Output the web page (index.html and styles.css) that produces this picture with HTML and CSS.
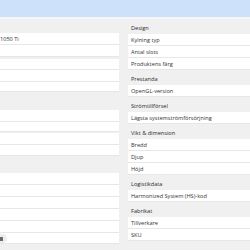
FILE: index.html
```html
<!DOCTYPE html>
<html lang="sv">
<head>
<meta charset="utf-8">
<title>Specifikationer</title>
<link rel="stylesheet" href="styles.css">
</head>
<body>
<div class="topbar"></div>
<div class="strip"></div>
<main class="page">
  <section class="col left">
    <div class="ghead h14"></div>
    <div class="lrow r12"><span class="val">1050 Ti</span></div>
    <div class="lrow r12"></div>
    <div class="lrow r11 mt2"></div>
    <div class="lrow r12"></div>
    <div class="lrow r10"></div>
    <div class="ghead h18"></div>
    <div class="lrow r12"></div>
    <div class="lrow r10"></div>
    <div class="lrow r12 mt1"></div>
    <div class="lrow r11"></div>
    <div class="ghead h17"></div>
    <div class="lrow r12"></div>
    <div class="lrow r12"></div>
    <div class="lrow r12"></div>
    <div class="lrow r12"></div>
    <div class="lrow r12"></div>
    <div class="lrow r11"><span class="copy" aria-label="Kopiera"><span class="glyph"></span></span></div>
    <div class="foot"></div>
  </section>
  <section class="col right">
    <div class="ghead">Design</div>
    <div class="row">Kylning typ</div>
    <div class="row">Antal slots</div>
    <div class="row">Produktens färg</div>
    <div class="ghead">Prestanda</div>
    <div class="row">OpenGL-version</div>
    <div class="ghead">Strömtillförsel</div>
    <div class="row">Lägsta systemströmförsörjning</div>
    <div class="ghead">Vikt &amp; dimension</div>
    <div class="row">Bredd</div>
    <div class="row">Djup</div>
    <div class="row">Höjd</div>
    <div class="ghead">Logistikdata</div>
    <div class="row">Harmonized System (HS)-kod</div>
    <div class="ghead">Fabrikat</div>
    <div class="row">Tillverkare</div>
    <div class="row">SKU</div>
  </section>
</main>
</body>
</html>
```

FILE: styles.css
```css
* { box-sizing: border-box; margin: 0; padding: 0; }
html, body { width: 250px; height: 250px; overflow: hidden; }
body {
  margin: 0;
  background: #f0f0f0;
  font-family: "Open Sans", "Noto Sans", sans-serif;
  font-size: 5.6px;
  color: #333;
}
.topbar { height: 17px; background: #cee1fb; }
.strip { height: 2px; background: #f6f6f8; }
.page {
  display: grid;
  grid-template-columns: 119px 122px;
  column-gap: 9px;
}
.col { display: flex; flex-direction: column; }

.ghead {
  height: 15px;
  display: flex;
  align-items: flex-end;
  padding: 0 3px 2px;
  line-height: 8px;
  color: #2a2a2a;
}
.h14 { height: 14px; }
.h17 { height: 17px; }
.h18 { height: 18px; }

.row {
  height: 12px;
  background: #fff;
  border-bottom: 1px solid #e7e7e7;
  display: flex;
  align-items: center;
  padding: 1px 3px 0;
  line-height: 10px;
  white-space: nowrap;
}

.lrow {
  display: flex;
  align-items: center;
  background: #fff;
  border-bottom: 1px solid #e7e7e7;
  line-height: 9px;
  white-space: nowrap;
  padding-top: 1px;
}
.r10 { height: 10px; }
.r11 { height: 11px; }
.r12 { height: 12px; }
.mt1 { margin-top: 1px; }
.mt2 { margin-top: 2px; }
.val { color: #333; }

.copy {
  width: 7px;
  height: 9px;
  border-radius: 0 5px 5px 0;
  background: #ededed;
  display: flex;
  align-items: center;
  padding-left: 0;
}
.glyph {
  width: 3px;
  height: 4px;
  background: #6a6a6a;
  border-radius: 0 0.5px 0.5px 0;
}
.foot { height: 2px; }
```
